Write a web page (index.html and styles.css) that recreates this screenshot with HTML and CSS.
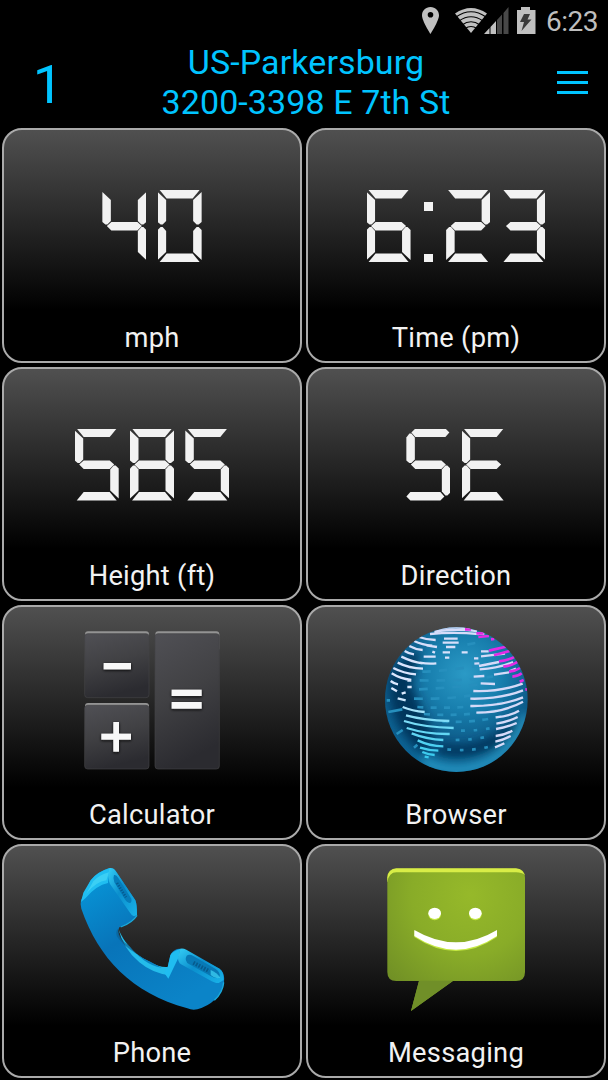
FILE: index.html
```html
<!DOCTYPE html>
<html lang="en">

<head>
    <meta charset="UTF-8">
    <meta name="viewport" content="width=device-width, initial-scale=1.0">
    <title>Car dashboard</title>
    <link rel="stylesheet" href="styles.css">
</head>

<body>
    <div class="status-bar">
        <svg class="status-icons" viewBox="0 0 122 30" aria-hidden="true">
            <path fill="#c0c0c0" fill-rule="evenodd" d="M10.500 0C5.500 0 2 3.800 2 8.300c0 5.800 8.500 18.700 8.500 18.700S19 14 19 8.300C19 3.800 15.500 0 10.500 0zm0 5a2.800 2.800 0 1 1 0 5.600 2.800 2.800 0 0 1 0-5.600z"/>
            <path fill="#c0c0c0" d="M35 6.500Q51-4.500 67 6.500L51 26z"/>
            <g fill="none" stroke="#000" stroke-width="1.200">
                <path d="M36 10Q51-.5 66 10"/>
                <path d="M39 14Q51 5.500 63 14"/>
                <path d="M42 18Q51 11.500 60 18"/>
                <path d="M45 21.500Q51 17.500 57 21.500"/>
            </g>
            <path fill="#c0c0c0" d="M64 27l5.500-6V27zM70.500 20l5.500-6V27h-5.500z"/>
            <path fill="#484848" d="M77 13l5-5.500V27h-5zM83.500 6l5-6v27h-5z"/>
            <path fill="#c0c0c0" d="M101 0h9v3h5.500v24H97V3h4z"/>
            <path fill="#3a3a3a" d="M104 7h6l-2.500 5.500h4L101.500 24l2.500-9h-4z"/>
        </svg>
        <span class="clock">6:23</span>
    </div>

    <div class="header">
        <div class="page-number">1</div>
        <div class="address">US-Parkersburg<br>3200-3398 E 7th St</div>
        <div class="menu"><span></span><span></span><span></span></div>
    </div>

    <div class="tiles">
        <div class="tile">
            <div class="readout" role="img" aria-label="40">
                <div class="digit"><i class="f"></i><i class="b"></i><i class="g"></i><i class="c"></i></div>
                <div class="digit"><i class="a"></i><i class="b"></i><i class="c"></i><i class="d"></i><i class="e"></i><i class="f"></i></div>
            </div>
            <div class="label">mph</div>
        </div>

        <div class="tile">
            <div class="readout" role="img" aria-label="6:23">
                <div class="digit"><i class="a"></i><i class="c"></i><i class="d"></i><i class="e"></i><i class="f"></i><i class="g"></i></div>
                <div class="colon"><span></span><span></span></div>
                <div class="digit"><i class="a"></i><i class="b"></i><i class="g"></i><i class="e"></i><i class="d"></i></div>
                <div class="digit"><i class="a"></i><i class="b"></i><i class="g"></i><i class="c"></i><i class="d"></i></div>
            </div>
            <div class="label">Time (pm)</div>
        </div>

        <div class="tile">
            <div class="readout" role="img" aria-label="585">
                <div class="digit"><i class="a"></i><i class="f"></i><i class="g"></i><i class="c"></i><i class="d"></i></div>
                <div class="digit"><i class="a"></i><i class="b"></i><i class="c"></i><i class="d"></i><i class="e"></i><i class="f"></i><i class="g"></i></div>
                <div class="digit"><i class="a"></i><i class="f"></i><i class="g"></i><i class="c"></i><i class="d"></i></div>
            </div>
            <div class="label">Height (ft)</div>
        </div>

        <div class="tile">
            <div class="readout" role="img" aria-label="SE">
                <div class="digit letter-s"><i class="a"></i><i class="f"></i><i class="g"></i><i class="c"></i><i class="d"></i></div>
                <div class="digit"><i class="a"></i><i class="f"></i><i class="g"></i><i class="e"></i><i class="d"></i></div>
            </div>
            <div class="label">Direction</div>
        </div>

        <div class="tile">
            <svg class="icon" viewBox="0 0 495 495" aria-hidden="true">
                <defs>
                    <linearGradient id="key" x1="0" y1="0" x2=".25" y2="1">
                        <stop offset="0" stop-color="#505055"/>
                        <stop offset=".5" stop-color="#414144"/>
                        <stop offset="1" stop-color="#2b2b30"/>
                    </linearGradient>
                    <filter id="glow" x="-20%" y="-50%" width="140%" height="200%">
                        <feDropShadow dx="0" dy="3" stdDeviation="5" flood-color="#111"/>
                    </filter>
                </defs>
                <g fill="#939393">
                    <rect x="45" y="37" width="192" height="60" rx="9"/>
                    <rect x="45" y="252" width="192" height="60" rx="9"/>
                    <rect x="256" y="37" width="192" height="60" rx="9"/>
                </g>
                <g fill="url(#key)" stroke="#424246" stroke-width="2">
                    <rect x="44" y="44" width="193" height="192" rx="9"/>
                    <rect x="44" y="259" width="193" height="191" rx="9"/>
                    <rect x="255" y="44" width="193" height="406" rx="9"/>
                </g>
                <g fill="#f8f8f8" filter="url(#glow)">
                    <rect x="101" y="132" width="82" height="19"/>
                    <rect x="94" y="344" width="89" height="18"/>
                    <rect x="130" y="309" width="17" height="89"/>
                    <rect x="305" y="212" width="90" height="19"/>
                    <rect x="305" y="249" width="90" height="20"/>
                </g>
            </svg>
            <div class="label">Calculator</div>
        </div>

        <div class="tile">
            <svg class="icon" viewBox="-5 0 495 495" aria-hidden="true">
                <defs>
                    <radialGradient id="sea" cx=".55" cy=".32" r=".7">
                        <stop offset="0" stop-color="#2b9ac6"/>
                        <stop offset=".35" stop-color="#187fae"/>
                        <stop offset=".7" stop-color="#0b5583"/>
                        <stop offset="1" stop-color="#0c6b9c"/>
                    </radialGradient>
                    <linearGradient id="land" x1="0" y1="0" x2="0" y2="420" gradientUnits="userSpaceOnUse">
                        <stop offset="0" stop-color="#d5d9f8"/>
                        <stop offset=".55" stop-color="#dbeaff"/>
                        <stop offset=".75" stop-color="#74dbf6"/>
                        <stop offset="1" stop-color="#33c8ec"/>
                    </linearGradient>
                    <filter id="soft"><feGaussianBlur stdDeviation="14"/></filter>
                    <clipPath id="ball"><ellipse cx="242" cy="242" rx="214" ry="217"/></clipPath>
                </defs>
                <g clip-path="url(#ball)">
                    <rect x="20" y="20" width="450" height="450" fill="url(#sea)"/>
                    <g filter="url(#soft)">
                        <path fill="#03345c" d="M45 170q45-70 90-75l-30 100 70 160-30 50Q30 320 45 170z"/>
                        <path fill="#03345c" d="M190 375q120 25 225-70l15 20q-100 110-245 80z"/>
                        <path fill="none" stroke="#2da6d2" stroke-width="20" d="M140 425q110 55 215-5 70-45 97-135"/>
                    </g>
                    <g fill="none" stroke="#268fbd" stroke-width="8">
                        <path stroke-dasharray="26 24" d="M140 158q80-2 210-25M132 184q140 3 220-12M130 211q100-5 175-14M115 239q100 2 170-10"/>
                        <path stroke-dasharray="18 22" d="M125 264q130 8 260-14M145 285q120 10 250-17M200 308q100 5 190-20"/>
                        <path stroke-dasharray="11 26" d="M256 335q60 0 100-10M240 363q60 0 110-14M215 391q70 7 130-9"/>
                        <path d="M38 279l42-8M115 386l10-9M33 244h10M63 345l18-12M275 77l24-5"/>
                    </g>
                    <g fill="none" stroke="url(#land)" stroke-width="7">
                        <path d="M176 37q70-9 128-1M188 29q50-7 96-1M163 45q70-7 147 0M205 59h41M201 71h48M211 84h28M201 100h22M208 116h13M258 100h18"/>
                        <path d="M130 54q24 9 50 9M115 66q25 12 55 14M101 81q20 11 40 12M152 79l32 5M87 96q12 8 28 10M144 113h36M170 98l8 3M77 113q33 16 63 20M132 131q25 4 50 2M66 131q34 17 76 18M53 147q30 16 68 19M48 163q25 16 59 20M45 186q10 8 22 10M47 207l17 10M95 185h12M95 204h13M66 238l24 6M78 224l12-4"/>
                        <path d="M81 264q28 12 66 15M91 289q50 14 130 17M85 306q60 19 149 21M93 327q60 19 129 18M108 343q45 18 95 20M126 364q35 17 77 18M133 386q28 9 55 9M140 399q18 8 37 9M147 413l12 2"/>
                    </g>
                    <g fill="none" stroke="#d5daf8" stroke-width="7">
                        <path d="M308 44l18 1M316 97h23M316 112l72-8M295 118h13M296 134l15-1M312 151q55-3 100-22M310 141l60-12M294 173l32-2M355 167l45-7M401 157l20-8M315 193l43 2M293 216q80 3 148-22M284 239q90 2 158-25M284 261q92 1 158-26M302 281q80 0 140-33M360 295q45-4 70-20M362 314q35-5 64-20M361 330q35-6 62-18M360 351q26-2 50-16M359 368q22-4 46-17M358 385q15-5 28-12"/>
                    </g>
                    <g fill="none" stroke="#e32be5" stroke-width="8">
                        <path d="M268 31h18M302 43h22M308 54l32-3M346 61l10-1M340 95l60-14M355 109l53-15M370 127q29-4 48-14M383 143q30-4 45-16M400 158q20-2 33-11M410 173q17-1 28-10M432 188l12-5M449 211h7"/>
                    </g>
                </g>
            </svg>
            <div class="label">Browser</div>
        </div>

        <div class="tile">
            <svg class="icon" viewBox="0 8 495 495" aria-hidden="true">
                <defs>
                    <linearGradient id="handset" x1="0" y1="0" x2=".6" y2="1">
                        <stop offset="0" stop-color="#079bdd"/>
                        <stop offset=".5" stop-color="#0874b9"/>
                        <stop offset="1" stop-color="#0b84c8"/>
                    </linearGradient>
                    <linearGradient id="earpiece" x1="0" y1="0" x2="1" y2="1">
                        <stop offset="0" stop-color="#34cdf5"/>
                        <stop offset=".45" stop-color="#0b8fcd"/>
                        <stop offset="1" stop-color="#19b3e9"/>
                    </linearGradient>
                </defs>
                <path fill="url(#handset)" d="M62 75Q80 50 119 38q12-1 18 9l59 88q5 12 5 44-18 24-53 37-8 14 2 31c38 62 80 90 143 88l8-35q4-12 20-19 10-2 20 2l108 58q17 10 13 43-16 60-80 78-15 4-30-3C185 412 86 310 34 160q-4-12-1-25z"/>
                <path fill="#20bef1" d="M62 75Q80 50 119 38l4 10q-10 17-9 35-35 7-67 45l-14 12 7-28z"/>
                <path fill="#42d3f5" opacity=".8" d="M70 78q18-20 47-27l-8 24q-31 4-60 40z"/>
                <path fill="url(#earpiece)" d="M119 38q12-1 18 9l59 88q5 12 5 44l-9 4q-8-3-13-12L120 86q-9-18-1-48z"/>
                <path fill="#067cba" d="M132 59q7-2 13 9l39 62q2 12-5 13-9-1-15-12l-31-50q-5-12-1-22z"/>
                <path stroke="#055b91" stroke-width="8" stroke-dasharray="4 4" d="M141 83l27 43"/>
                <path fill="#24bcea" d="M145 220q28 69 95 100 28 17 53 15l5 25q-52-7-90-39-49-42-63-101z"/>
                <path fill="#0b5f94" opacity=".65" d="M143 220q5 31 31 50l25 25q-34-20-55-47-10-14-1-28z"/>
                <path fill="#0b83c1" d="M164 254q26 45 77 65l34 18q-56-7-111-83z"/>
                <path fill="#20bdf0" d="M293 335l8-35q4-12 30-20l-5 26-31 64-12-17z"/>
                <path fill="url(#earpiece)" d="M331 280q8-2 18 3l100 57q13 10 12 34l-15 9q-10 1-29-10l-84-46q-9-7-9-20z"/>
                <path fill="#0879b5" d="M350 301q8-6 20 1l67 39q15 11 12 23-9 8-27-2l-64-35q-17-11-8-26z"/>
                <path stroke="#065b8e" stroke-width="12" stroke-dasharray="5 4" d="M370 322l48 26"/>
                <path fill="#3ac9ef" opacity=".8" d="M422 344q19 8 29 23-15 5-29-8z"/>
                <path fill="none" stroke="#19aadd" stroke-width="4" d="M461 381q-2 29-28 54M201 180q-14 22-49 35"/>
            </svg>
            <div class="label">Phone</div>
        </div>

        <div class="tile">
            <svg class="icon" viewBox="-3 8 495 495" aria-hidden="true">
                <defs>
                    <radialGradient id="bubble" cx=".6" cy=".18" r=".85">
                        <stop offset="0" stop-color="#96b92a"/>
                        <stop offset=".5" stop-color="#89ac28"/>
                        <stop offset="1" stop-color="#6f8e25"/>
                    </radialGradient>
                    <clipPath id="body"><rect x="37" y="39" width="413" height="338" rx="27"/></clipPath>
                </defs>
                <path fill="url(#bubble)" d="M64 40H423q27 0 27 27V350q0 27-27 27H234L108 467l24-90H64q-27 0-27-27V67q0-27 27-27z"/>
                <path fill="#708f28" d="M132 376h102L108 467z"/>
                <g clip-path="url(#body)">
                    <path fill="#d8ed47" d="M30 30H460V80q-4-29-37-29H64Q42 51 37 80H30z"/>
                </g>
                <g fill="#c5e943" transform="translate(0 3)">
                    <ellipse cx="179" cy="174" rx="19" ry="18"/>
                    <ellipse cx="301" cy="174" rx="19" ry="18"/>
                    <path d="M118 224q126 74 248 0v18q-122 84-248 0z"/>
                </g>
                <g fill="#fff">
                    <ellipse cx="179" cy="174" rx="19" ry="17"/>
                    <ellipse cx="301" cy="174" rx="19" ry="17"/>
                    <path d="M118 224q126 74 248 0v18q-122 82-248 0z"/>
                </g>
            </svg>
            <div class="label">Messaging</div>
        </div>
    </div>
</body>

</html>
```
FILE: styles.css
```css
:root {
    --accent: #00c4ff;
    --status: #bebebe;
    --border: #aaaaaa;
    --segment: #f2f2f2;
}

body {
    margin: 0;
    height: 1080px;
    overflow: hidden;
    background-color: #000;
    font-family: Roboto, sans-serif;
}

.status-bar {
    display: flex;
    justify-content: flex-end;
    height: 43px;
    padding: 0 10px 0 0;
}

.status-icons {
    width: 122px;
    height: 30px;
    margin: 7px 4px 0 0;
}

.clock {
    color: var(--status);
    font-size: 28px;
    line-height: 43px;
    width: 52px;
    letter-spacing: -0.5px;
}

.header {
    display: grid;
    grid-template-columns: 96px 1fr 92px;
    height: 85px;
    color: var(--accent);
}

.page-number {
    font-size: 54px;
    line-height: 83px;
    text-align: center;
}

.address {
    font-size: 34px;
    line-height: 40px;
    letter-spacing: 0.1px;
    text-align: center;
    margin-top: -1px;
    white-space: nowrap;
}

.menu {
    display: flex;
    flex-direction: column;
    gap: 7px;
    padding: 28px 0 0 41px;
}

.menu span {
    width: 31px;
    height: 3px;
    background-color: var(--accent);
}

.tiles {
    display: grid;
    grid-template-columns: 300px 300px;
    grid-auto-rows: 234.5px;
    gap: 4px;
    padding: 0 2px;
}

.tile {
    display: flex;
    flex-direction: column;
    align-items: center;
    justify-content: space-between;
    box-sizing: border-box;
    border: 2px solid var(--border);
    border-radius: 20px;
    background: linear-gradient(#505050, #000 78%);
}

.label {
    color: #f2f2f2;
    font-size: 27.3px;
    line-height: 32px;
    letter-spacing: 0.25px;
    margin-bottom: 7px;
}

.icon {
    width: 165px;
    height: 165px;
    margin-top: 12px;
}

/* seven segment display */
.readout {
    display: flex;
    gap: 11.3px;
    margin-top: 60px;
}

.digit {
    display: grid;
    width: 44px;
    height: 72px;
}

.digit i {
    grid-area: 1 / 1;
    background-color: var(--segment);
}

.a { clip-path: polygon(2px 0, 42px 0, 35px 8.5px, 9px 8.5px); }
.b { clip-path: polygon(44px 2px, 44px 32px, 41px 34.5px, 39px 34.5px, 35.5px 31px, 35.5px 10px); }
.c { clip-path: polygon(44px 40px, 41px 37px, 39px 37px, 35.5px 41px, 35.5px 62px, 44px 70px); }
.d { clip-path: polygon(2px 72px, 9px 63.5px, 35px 63.5px, 42px 72px); }
.e { clip-path: polygon(0 40px, 3px 37px, 5px 37px, 8.5px 41px, 8.5px 62px, 0 70px); }
.f { clip-path: polygon(0 2px, 8.5px 10px, 8.5px 31px, 5px 34.5px, 3px 34.5px, 0 32px); }
.g { clip-path: polygon(4.5px 36px, 9px 32px, 35px 32px, 39.5px 36px, 35px 40.5px, 9px 40.5px); }

.letter-s .a { clip-path: polygon(5px 4px, 9px 0, 39px 0, 43px 4px, 39px 8.5px, 9px 8.5px); }
.letter-s .f { clip-path: polygon(0 9px, 3px 5px, 5px 5px, 8.5px 9px, 8.5px 31px, 5px 34.5px, 3px 34.5px, 0 32px); }
.letter-s .c { clip-path: polygon(44px 40px, 41px 37px, 39px 37px, 35.5px 41px, 35.5px 63px, 39px 67px, 41px 67px, 44px 64px); }
.letter-s .d { clip-path: polygon(0 68px, 4px 63.5px, 34px 63.5px, 38px 68px, 34px 72px, 4px 72px); }

.colon {
    display: flex;
    flex-direction: column;
    justify-content: space-between;
    align-items: center;
    box-sizing: border-box;
    width: 13px;
    height: 72px;
    padding-top: 12px;
}

.colon span {
    width: 8.5px;
    height: 8.5px;
    background-color: var(--segment);
}
```
